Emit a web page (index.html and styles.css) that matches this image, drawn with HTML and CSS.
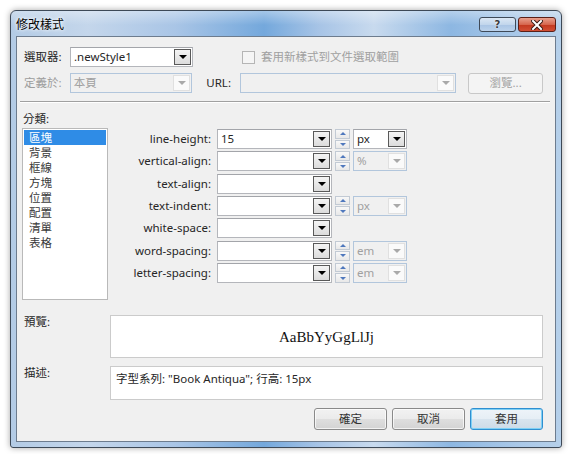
FILE: index.html
```html
<!DOCTYPE html>
<html>
<head>
<meta charset="utf-8">
<title>修改樣式</title>
<link rel="stylesheet" href="styles.css">
</head>
<body>
<div class="window">
  <div class="titlebar">
    <span class="title">修改樣式</span>
    <div class="caption">
      <div class="cbtn help"><span>?</span></div>
      <div class="cbtn close">
        <svg width="12" height="10" viewBox="0 0 12 10"><path d="M2 1 L10 9 M10 1 L2 9" stroke="#3a1a14" stroke-width="4" stroke-linecap="square"/><path d="M2 1 L10 9 M10 1 L2 9" stroke="#fff" stroke-width="2" stroke-linecap="square"/></svg>
      </div>
    </div>
  </div>
  <div class="client">
    <div class="row r1">
      <span class="lbl">選取器:</span>
      <div class="combo sel"><span class="val">.newStyle1</span><span class="dd"></span></div>
      <div class="chk"><span class="box"></span><span>套用新樣式到文件選取範圍</span></div>
    </div>
    <div class="row r2">
      <span class="lbl dis">定義於:</span>
      <div class="combo sel off"><span class="val">本頁</span><span class="dd"></span></div>
      <span class="url-lbl">URL:</span>
      <div class="combo url off"><span class="val"></span><span class="dd"></span></div>
      <div class="btn browse">瀏覽...</div>
    </div>
    <div class="sep"></div>
    <div class="main">
      <div class="cats">
        <div class="cat-lbl">分類:</div>
        <div class="list">
          <div class="item on">區塊</div>
          <div class="item">背景</div>
          <div class="item">框線</div>
          <div class="item">方塊</div>
          <div class="item">位置</div>
          <div class="item">配置</div>
          <div class="item">清單</div>
          <div class="item">表格</div>
        </div>
      </div>
      <div class="props">
        <span class="plbl">line-height:</span>
        <div class="combo"><span class="val">15</span><span class="dd"></span></div>
        <div class="spin"><span class="up"></span><span class="dn"></span></div>
        <div class="combo"><span class="val">px</span><span class="dd"></span></div>

        <span class="plbl">vertical-align:</span>
        <div class="combo"><span class="val"></span><span class="dd"></span></div>
        <div class="spin"><span class="up"></span><span class="dn"></span></div>
        <div class="combo unit off"><span class="val">%</span><span class="dd"></span></div>

        <span class="plbl">text-align:</span>
        <div class="combo"><span class="val"></span><span class="dd"></span></div>
        <span></span><span></span>

        <span class="plbl">text-indent:</span>
        <div class="combo"><span class="val"></span><span class="dd"></span></div>
        <div class="spin"><span class="up"></span><span class="dn"></span></div>
        <div class="combo unit off"><span class="val">px</span><span class="dd"></span></div>

        <span class="plbl">white-space:</span>
        <div class="combo"><span class="val"></span><span class="dd"></span></div>
        <span></span><span></span>

        <span class="plbl">word-spacing:</span>
        <div class="combo"><span class="val"></span><span class="dd"></span></div>
        <div class="spin"><span class="up"></span><span class="dn"></span></div>
        <div class="combo unit off"><span class="val">em</span><span class="dd"></span></div>

        <span class="plbl">letter-spacing:</span>
        <div class="combo"><span class="val"></span><span class="dd"></span></div>
        <div class="spin"><span class="up"></span><span class="dn"></span></div>
        <div class="combo unit off"><span class="val">em</span><span class="dd"></span></div>
      </div>
    </div>
    <div class="field prev">
      <span class="flbl">預覽:</span>
      <div class="pbox">AaBbYyGgLlJj</div>
    </div>
    <div class="field desc">
      <span class="flbl">描述:</span>
      <div class="dbox">字型系列: "Book Antiqua"; 行高: 15px</div>
    </div>
    <div class="buttons">
      <div class="btn">確定</div>
      <div class="btn">取消</div>
      <div class="btn def">套用</div>
    </div>
  </div>
</div>
</body>
</html>
```

FILE: styles.css
```css
* { box-sizing: border-box; }
html, body { margin: 0; }
body {
  padding: 10px;
  background: #ffffff;
  font-family: "Noto Sans", "Noto Sans CJK TC", sans-serif;
  font-size: 11.5px;
  color: #262626;
  line-height: 14px;
}

.window {
  width: 552px;
  height: 438px;
  border: 1px solid #3d4957;
  border-radius: 6px 6px 3px 3px;
  display: flex;
  flex-direction: column;
  background:
    linear-gradient(180deg, rgba(255,255,255,0.35) 0px, rgba(255,255,255,0) 14px),
    linear-gradient(90deg, #b3cbe5 0%, #c4d6eb 14%, #a9c5e6 30%, #74a8dc 46%, #a7c4e6 56%, #c8daee 66%, #8db7e2 80%, #a9c8e8 92%, #b6d0ea 100%);
  box-shadow: 0 0 6px rgba(0,0,0,0.35);
}

.titlebar {
  height: 25px;
  display: flex;
  align-items: center;
  padding-left: 5px;
}
.title {
  font-family: "Noto Sans CJK TC", sans-serif;
  font-size: 12px;
  color: #000;
  text-shadow: 0 0 5px #fff, 0 0 3px #fff;
}
.caption {
  margin-left: auto;
  margin-right: 5px;
  align-self: flex-start;
  margin-top: 6px;
  display: flex;
  gap: 2px;
}
.cbtn {
  height: 15px;
  border: 1px solid #3f4a58;
  border-radius: 3px;
  display: flex;
  align-items: center;
  justify-content: center;
}
.help {
  width: 37px;
  background: linear-gradient(180deg, #dbe7f4 0%, #c2d6ec 50%, #a9c4e4 51%, #bcd3ec 100%);
}
.help span {
  font-family: "DejaVu Sans", sans-serif;
  font-weight: bold;
  font-size: 10px;
  line-height: 10px;
  color: #3b3b3b;
  text-shadow: 0 0 2px #fff;
}
.close {
  width: 38px;
  border-color: #5a1f17;
  background: linear-gradient(180deg, #e8a08e 0%, #d6674f 50%, #c2381f 51%, #d24f35 100%);
}

.client {
  flex: 1;
  margin: 0 5px 5px;
  border: 1px solid #6d7c8e;
  background: #f0f0f0;
  padding: 10px 12px 0 6px;
  display: flex;
  flex-direction: column;
}

.row { display: flex; align-items: center; height: 20px; }
.r2 { margin-top: 6px; }
.lbl { width: 47px; padding-left: 1px; }
.dis { color: #9d9d9d; }

.combo {
  display: flex;
  align-items: center;
  height: 20px;
  border: 1px solid #b4b6bb;
  border-top-color: #a3a5aa;
  background: #fff;
}
.combo .val {
  flex: 1;
  padding-left: 3px;
  white-space: nowrap;
  overflow: hidden;
}
.combo .dd {
  width: 17px;
  height: 16px;
  margin-right: 1px;
  border: 1px solid #595959;
  background: linear-gradient(180deg, #f4f4f4, #dcdcdc);
  display: flex;
  align-items: center;
  justify-content: center;
}
.combo .dd::after {
  content: "";
  border-left: 4px solid transparent;
  border-right: 4px solid transparent;
  border-top: 4px solid #000;
}
.combo.off {
  background: #f0f0f0;
  border-color: #b2c6dc;
  color: #a0a0a0;
}
.combo.off .dd {
  border-color: #e0e0e0;
  background: #fafafa;
}
.combo.off .dd::after { border-top-color: #a9a9a9; }

.sel { width: 123px; }
.chk {
  margin-left: 49px;
  display: flex;
  align-items: center;
  color: #a0a0a0;
}
.chk .box {
  width: 13px;
  height: 13px;
  border: 1px solid #b5b5b5;
  background: #f5f5f5;
  margin-right: 6px;
}
.url-lbl { margin-left: 14px; width: 34px; }
.url { width: 217px; }

.sep {
  margin-top: 8px;
  margin-left: -3px;
  width: 530px;
  height: 2px;
  border-top: 1px solid #a0a0a0;
  border-bottom: 1px solid #ffffff;
}

.main { display: flex; margin-top: 9px; }
.cats { width: 86px; margin-left: -1px; }
.cat-lbl { height: 16px; padding-left: 1px; }
.list {
  height: 172px;
  border: 1px solid #b9b9b9;
  background: #fff;
  padding: 1px;
}
.item {
  height: 15px;
  line-height: 15px;
  padding-left: 5px;
  color: #3a3a3a;
}
.item.on { background: #2f8ce6; color: #fff; }

.props {
  margin-left: 7px;
  margin-top: 17px;
  display: grid;
  grid-template-columns: 99px 115px 15px 54px;
  grid-auto-rows: 20px;
  column-gap: 3px;
  row-gap: 2.33px;
  align-items: center;
}
.plbl { text-align: right; padding-right: 3px; }

.spin { display: flex; flex-direction: column; gap: 1px; height: 20px; }
.spin span {
  flex: 1;
  border: 1px solid #c2cad4;
  background: linear-gradient(180deg, #f8f8f8, #e8e8e8);
  display: flex;
  align-items: center;
  justify-content: center;
}
.spin .up::after {
  content: "";
  border-left: 3px solid transparent;
  border-right: 3px solid transparent;
  border-bottom: 3px solid #4f78bd;
}
.spin .dn::after {
  content: "";
  border-left: 3px solid transparent;
  border-right: 3px solid transparent;
  border-top: 3px solid #4f78bd;
}

.field { display: flex; }
.prev { margin-top: 15px; }
.desc { margin-top: 8px; }
.flbl { width: 87px; padding-left: 1px; }
.pbox {
  width: 433px;
  height: 43px;
  border: 1px solid #cbcbcb;
  background: #fff;
  display: flex;
  align-items: center;
  justify-content: center;
  font-family: "Liberation Serif", serif;
  font-size: 15px;
  color: #111;
}
.dbox {
  width: 433px;
  height: 34px;
  border: 1px solid #cbcbcb;
  background: #fff;
  padding: 5px 5px;
  color: #262626;
}

.buttons {
  margin-top: 8px;
  display: flex;
  justify-content: flex-end;
  gap: 5px;
}
.btn {
  width: 73px;
  height: 22px;
  border: 1px solid #8a8a8a;
  border-radius: 3px;
  background: linear-gradient(180deg, #f2f2f2 0%, #ebebeb 48%, #dedede 52%, #d3d3d3 100%);
  box-shadow: inset 0 0 0 1px rgba(255,255,255,0.7);
  display: flex;
  align-items: center;
  justify-content: center;
  color: #333;
}
.btn.def {
  border-color: #2f8fd0;
  box-shadow: inset 0 0 0 1px #7fd0f5;
  background: linear-gradient(180deg, #eef4f9 0%, #e6eef5 48%, #d8e4ee 52%, #cddbe8 100%);
}
.btn.browse {
  margin-left: 12px;
  width: 75px;
  height: 21px;
  color: #a3a3a3;
  border-color: #c8c8c8;
  background: #f4f4f4;
  box-shadow: none;
}
```
